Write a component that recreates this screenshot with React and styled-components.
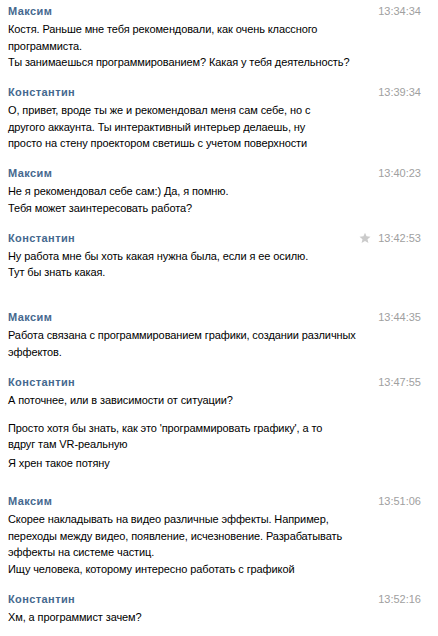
import React from 'react';
import styled, {createGlobalStyle} from "styled-components";

const Global = createGlobalStyle`
    body {
        margin: 0;
        background: #fff;
        font-family: Tahoma, "Liberation Sans", Arial, sans-serif;
        font-size: 11px;
    }
`;

const History = styled.div`
    width: 438px;
    padding: 3px 17px 0 8px;
    box-sizing: border-box;
`;

const Message = styled.div`
    margin-top: ${props => props.top || 0}px;
    &:first-child { margin-top: 0; }
`;

const Header = styled.div`
    display: flex;
    justify-content: space-between;
    align-items: center;
    height: 16.5px;
    line-height: 16.5px;
`;

const Author = styled.span`
    font-weight: 700;
    color: #45688e;
    letter-spacing: 0.4px;
`;

const Meta = styled.div`
    display: flex;
    align-items: center;
    gap: 7px;
`;

const Time = styled.span`
    color: #a0a0a0;
`;

const Body = styled.div`
    margin-top: 1.5px;
    color: #000;
    letter-spacing: -0.1px;
`;

const Line = styled.div`
    line-height: 16.5px;
    white-space: nowrap;
    margin-top: ${props => props.gap || 0}px;
`;

const Star = () => (
    <svg width="12" height="12" viewBox="0 0 24 24">
        <path fill="#cbcbcb" d="M12 1.5l3.1 7.2 7.9.6-6 5.2 1.9 7.7L12 18.1l-6.9 4.1 1.9-7.7-6-5.2 7.9-.6z"/>
    </svg>
);

const messages = [
    {author: 'Максим', time: '13:34:34', lines: [
        ['Костя. Раньше мне тебя рекомендовали, как очень классного'],
        ['программиста.'],
        ['Ты занимаешься программированием? Какая у тебя деятельность?'],
    ]},
    {author: 'Константин', time: '13:39:34', top: 13.5, lines: [
        ['О, привет, вроде ты же и рекомендовал меня сам себе, но с'],
        ['другого аккаунта. Ты интерактивный интерьер делаешь, ну'],
        ['просто на стену проектором светишь с учетом поверхности'],
    ]},
    {author: 'Максим', time: '13:40:23', top: 13.5, lines: [
        ['Не я рекомендовал себе сам:) Да, я помню.'],
        ['Тебя может заинтересовать работа?'],
    ]},
    {author: 'Константин', time: '13:42:53', star: true, top: 13.5, lines: [
        ['Ну работа мне бы хоть какая нужна была, если я ее осилю.'],
        ['Тут бы знать какая.'],
    ]},
    {author: 'Максим', time: '13:44:35', top: 28.5, lines: [
        ['Работа связана с программированием графики, создании различных'],
        ['эффектов.'],
    ]},
    {author: 'Константин', time: '13:47:55', top: 13.5, lines: [
        ['А поточнее, или в зависимости от ситуации?'],
        ['Просто хотя бы знать, как это \'программировать графику\', а то', 11.5],
        ['вдруг там VR-реальную'],
        ['Я хрен такое потяну', 2.5],
    ]},
    {author: 'Максим', time: '13:51:06', top: 21.5, lines: [
        ['Скорее накладывать на видео различные эффекты. Например,'],
        ['переходы между видео, появление, исчезновение. Разрабатывать'],
        ['эффекты на системе частиц.'],
        ['Ищу человека, которому интересно работать с графикой'],
    ]},
    {author: 'Константин', time: '13:52:16', top: 13.5, lines: [
        ['Хм, а программист зачем?'],
    ]},
];

const App = () => {
    return(
        <>
            <Global />
            <History>
                {messages.map((m, i) => (
                    <Message key={i} top={m.top}>
                        <Header>
                            <Author>{m.author}</Author>
                            <Meta>
                                {m.star && <Star />}
                                <Time>{m.time}</Time>
                            </Meta>
                        </Header>
                        <Body>
                            {m.lines.map(([text, gap], j) => (
                                <Line key={j} gap={gap}>{text}</Line>
                            ))}
                        </Body>
                    </Message>
                ))}
            </History>
        </>
    );
};

export default App;
